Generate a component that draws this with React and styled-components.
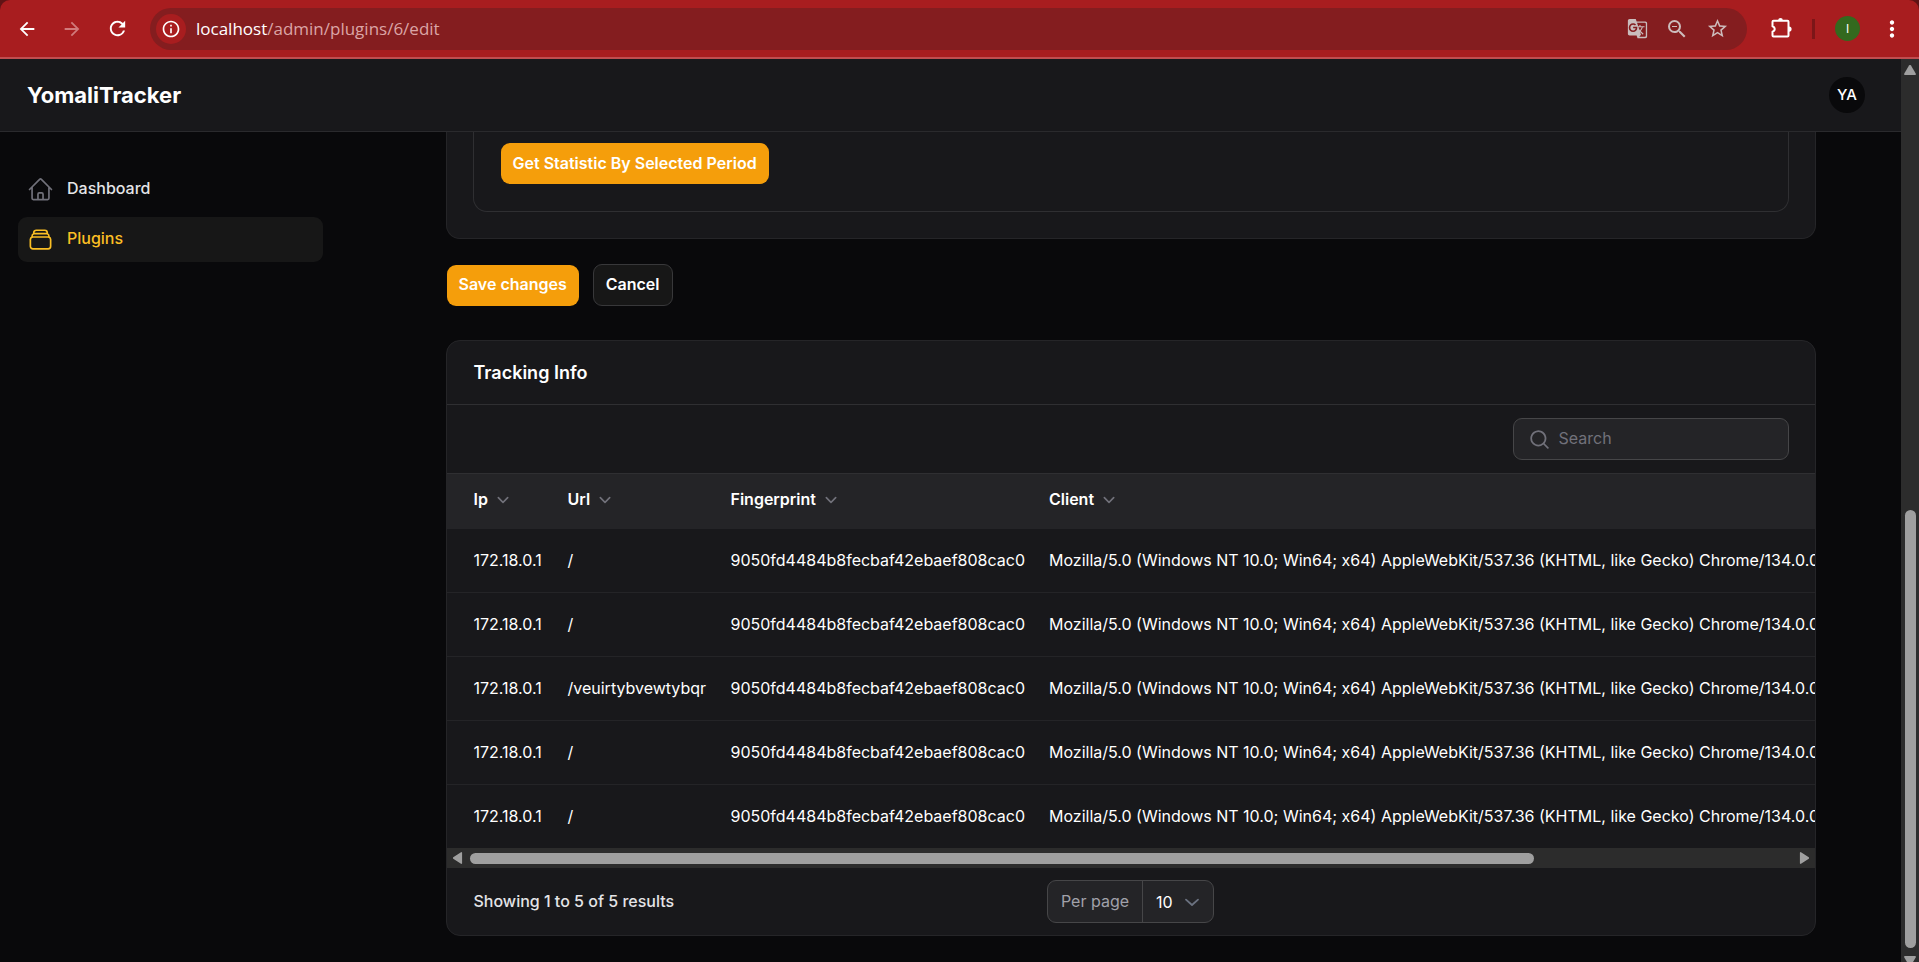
import React from 'react';
import styled, { createGlobalStyle } from 'styled-components';
import {
  HiOutlineHome,
  HiOutlineRectangleStack,
  HiMiniMagnifyingGlass,
  HiMiniChevronDown,
} from 'react-icons/hi2';
import {
  MdArrowBack,
  MdArrowForward,
  MdRefresh,
  MdInfoOutline,
  MdGTranslate,
  MdZoomOut,
  MdStarOutline,
  MdMoreVert,
} from 'react-icons/md';

const GlobalStyle = createGlobalStyle`
  *, *::before, *::after { box-sizing: border-box; }
  body {
    margin: 0;
    background: #09090b;
    color: #fff;
    font: 400 16px/24px Inter, "Liberation Sans", sans-serif;
  }
  button, input, select { font: inherit; }
  svg { display: block; flex: none; }
`;

const Window = styled.div`
  display: flex;
  flex-direction: column;
  height: 100vh;
  overflow: hidden;
  background: #5f1315;
`;

/* Browser toolbar */

const Toolbar = styled.div`
  display: flex;
  align-items: center;
  flex: none;
  height: 59px;
  padding: 0 12px 0 11px;
  border-radius: 10px 10px 0 0;
  background: #a81d1f;
  border-bottom: 2px solid #c04d4f;
`;

const ToolButton = styled.button`
  display: flex;
  align-items: center;
  justify-content: center;
  flex: none;
  width: ${(p) => p.$width || 32}px;
  height: 32px;
  padding: 0;
  border: 0;
  background: none;
  color: ${(p) => p.$color || '#fff'};
`;

const NavButtons = styled.div`
  display: flex;
  gap: 13px;
  margin-right: 17px;
`;

const AddressBar = styled.div`
  display: flex;
  align-items: center;
  flex: 1;
  height: 42px;
  padding: 0 14px 0 6px;
  border-radius: 21px;
  background: #841d1f;
`;

const SiteInfo = styled(ToolButton)`
  width: 30px;
  height: 30px;
  border-radius: 50%;
  background: #a81d1f;
`;

const Address = styled.div`
  flex: 1;
  padding-left: 10px;
  color: #dba5a6;
  font: 400 17px/24px "Open Sans", "Noto Sans", sans-serif;

  span { color: #fff; }
`;

const AddressActions = styled.div`
  display: flex;
  gap: 8px;
`;

const ToolbarEnd = styled.div`
  display: flex;
  align-items: center;
  margin-left: 18px;
`;

const ToolbarRule = styled.div`
  width: 3px;
  height: 20px;
  margin: 0 20px 0 15px;
  background: #7c1618;
`;

const Profile = styled.button`
  width: 25px;
  height: 25px;
  margin-right: 17px;
  padding: 0;
  border: 0;
  border-radius: 50%;
  background: #33691e;
  color: #fff;
  font-size: 12px;
  line-height: 25px;
`;

/* Page shell */

const Viewport = styled.div`
  display: flex;
  flex: 1;
  min-height: 0;
  background: #09090b;
`;

const Page = styled.div`
  display: flex;
  flex-direction: column;
  flex: 1;
  min-width: 0;
`;

const Topbar = styled.header`
  display: flex;
  align-items: center;
  justify-content: space-between;
  flex: none;
  height: 73px;
  padding: 0 36px 0 27px;
  background: #18181b;
  border-bottom: 1px solid #2a2a2d;
`;

const Brand = styled.a`
  color: #fff;
  font-size: 22px;
  font-weight: 700;
  line-height: 28px;
  text-decoration: none;
`;

const Avatar = styled.button`
  width: 36px;
  height: 36px;
  padding: 0;
  border: 0;
  border-radius: 50%;
  background: #09090b;
  color: #fff;
  font-size: 15px;
  font-weight: 500;
`;

const Body = styled.div`
  display: flex;
  flex: 1;
  min-height: 0;
`;

const Sidebar = styled.nav`
  display: flex;
  flex-direction: column;
  gap: 5px;
  flex: none;
  width: 360px;
  padding: 35px 37px 0 18px;
`;

const SidebarLink = styled.a`
  display: flex;
  align-items: center;
  gap: 13px;
  height: 45px;
  padding: 0 9px;
  border-radius: 9px;
  background: ${(p) => (p.$active ? '#171717' : 'transparent')};
  color: ${(p) => (p.$active ? '#fbbf24' : '#e4e4e7')};
  font-weight: 500;
  text-decoration: none;

  svg { color: ${(p) => (p.$active ? '#fbbf24' : '#71717a')}; }
  span { padding-bottom: 3px; }
`;

const Main = styled.main`
  flex: 1;
  min-width: 0;
  overflow: hidden;
  padding: 0 36px;
`;

const Content = styled.div`
  max-width: 1370px;
  margin: 0 auto;
`;

const FormCard = styled.section`
  padding: 0 26px 26px;
  border: 1px solid #252528;
  border-top: 0;
  border-radius: 0 0 14px 14px;
  background: #18181b;
`;

const Fieldset = styled.div`
  padding: 11px 27px 27px;
  border: 1px solid #2f2f32;
  border-top: 0;
  border-radius: 0 0 14px 14px;
`;

const Button = styled.button`
  display: block;
  height: ${(p) => (p.$outlined ? 42 : 41)}px;
  padding: 0 12px 2px;
  border: ${(p) => (p.$outlined ? '1px solid #38383a' : '0')};
  border-radius: 9px;
  background: ${(p) => (p.$outlined ? '#171717' : '#f59e0b')};
  color: #fff;
  font-weight: 600;
`;

const FormActions = styled.div`
  display: flex;
  align-items: center;
  gap: 14px;
  padding: 25px 0 34px 1px;
`;

/* Tracking table */

const TableCard = styled.section`
  overflow: hidden;
  border: 1px solid #252528;
  border-radius: 14px;
  background: #18181b;
`;

const CardTitle = styled.h3`
  margin: 0;
  padding: 18px 27px 17px;
  font-size: 18px;
  font-weight: 600;
  line-height: 28px;
`;

const CardToolbar = styled.div`
  display: flex;
  justify-content: flex-end;
  padding: 13px 26px;
  border-top: 1px solid #2f2f32;
  border-bottom: 1px solid #2f2f32;
`;

const SearchBox = styled.label`
  display: flex;
  align-items: center;
  gap: 8px;
  width: 276px;
  height: 42px;
  padding: 0 14px;
  border: 1px solid #464648;
  border-radius: 9px;
  background: #242427;
  color: #71717a;
`;

const SearchInput = styled.input`
  flex: 1;
  min-width: 0;
  padding: 0 0 2px;
  border: 0;
  outline: 0;
  background: none;
  color: #fff;

  &::placeholder { color: #71717a; opacity: 1; }
`;

const TableClip = styled.div`
  overflow: hidden;
`;

const Table = styled.table`
  min-width: 100%;
  border-spacing: 0;
  white-space: nowrap;

  th, td { padding: 0 11px 2px 13px; text-align: left; }
  th:first-child, td:first-child { padding-left: 27px; }
`;

const HeadCell = styled.th`
  width: ${(p) => p.$width};
  min-width: ${(p) => p.$width};
  height: 55px;
  background: #242427;
  font-weight: 600;
`;

const SortButton = styled.button`
  display: flex;
  align-items: center;
  gap: 4px;
  padding: 0 0 3px;
  border: 0;
  background: none;
  color: #fff;
  font-weight: 600;

  svg { color: #71717a; }
`;

const Row = styled.tr`
  td {
    height: 64px;
    border-bottom: 1px solid #242427;
  }
  &:last-child td {
    height: 63px;
    border-bottom: 0;
  }
`;

const HScroll = styled.div`
  display: flex;
  align-items: center;
  height: 20px;
  padding: 0 6px;
  background: #2c2c2c;
`;

const VScroll = styled.div`
  display: flex;
  flex-direction: column;
  align-items: center;
  flex: none;
  width: 18px;
  padding-top: 6px;
  background: #2c2c2c;
`;

const Thumb = styled.div`
  flex: ${(p) => p.$share};
  width: ${(p) => (p.$vertical ? '11px' : 'auto')};
  height: ${(p) => (p.$vertical ? 'auto' : '11px')};
  border-radius: 6px;
  background: #9f9f9f;
`;

const Gap = styled.div`
  flex: ${(p) => p.$share};
`;

const ArrowSlot = styled.div`
  display: flex;
  flex: none;
  justify-content: ${(p) => p.$justify || 'flex-start'};
  width: ${(p) => (p.$vertical ? 'auto' : '17px')};
  height: ${(p) => (p.$vertical ? '14px' : 'auto')};
  padding-top: ${(p) => p.$top || 0}px;
`;

const CardFooter = styled.div`
  display: grid;
  grid-template-columns: 1fr auto 1fr;
  align-items: center;
  padding: 12px 27px;
`;

const Summary = styled.span`
  padding-bottom: 2px;
  color: #e4e4e7;
  font-weight: 500;
`;

const PerPage = styled.label`
  display: flex;
  height: 43px;
  border: 1px solid #464648;
  border-radius: 9px;
  background: #242427;
  color: #a1a1aa;
  line-height: 40px;
`;

const PerPageLabel = styled.span`
  padding: 0 13px;
  border-right: 1px solid #464648;
`;

const SelectWrap = styled.span`
  display: grid;
  align-items: center;
  width: 70px;

  > * { grid-area: 1 / 1; }
  svg { justify-self: end; margin-right: 9px; pointer-events: none; }
`;

const Select = styled.select`
  width: 100%;
  height: 41px;
  padding: 0 0 0 13px;
  appearance: none;
  border: 0;
  outline: 0;
  background: none;
  color: #fff;

  option { background: #18181b; }
`;

const ARROWS = {
  up: ['M5 .6.3 8.500A1 1 0 0 0 1.100 10h9.800a1 1 0 0 0 .8-1.500L7 .6a1.200 1.200 0 0 0-2 0Z', 12, 10],
  down: ['M5 9.400.3 1.500A1 1 0 0 1 1.100 0h9.800a1 1 0 0 1 .8 1.500L7 9.400a1.200 1.200 0 0 1-2 0Z', 12, 10],
  left: ['M.6 5 8 .2a.7.7 0 0 1 1.100.6v10.400a.7.7 0 0 1-1.100.6L.6 7a1.200 1.200 0 0 1 0-2Z', 10, 12],
  right: ['M9.400 5 2 .2a.7.7 0 0 0-1.100.6v10.400a.7.7 0 0 0 1.100.6L9.400 7a1.200 1.200 0 0 0 0-2Z', 10, 12],
};

function ScrollArrow({ dir }) {
  const [d, w, h] = ARROWS[dir];
  return (
    <svg width={w} height={h} viewBox={`0 0 ${w} ${h}`} fill="#9f9f9f" aria-hidden="true">
      <path d={d} />
    </svg>
  );
}

function PuzzleIcon() {
  return (
    <svg width="24" height="24" viewBox="0 0 24 24" fill="none" stroke="#fff" strokeWidth="2" strokeLinejoin="round" aria-hidden="true">
      <path d="M4.500 3.800h14a1 1 0 0 1 1 1v13.700a1 1 0 0 1-1 1h-14a1 1 0 0 1-1-1v-3.700c1.300-.4 2.200-1.400 2.200-2.700s-.9-2.300-2.200-2.700V4.800a1 1 0 0 1 1-1Z" />
      <path d="M9.200 3.200a2.300 2.300 0 0 1 4.600 0ZM20 9.500a2.600 2.600 0 0 1 0 5.200Z" fill="#fff" stroke="none" />
    </svg>
  );
}

const COLUMNS = [
  { name: 'Ip', width: '108px' },
  { name: 'Url', width: '163px' },
  { name: 'Fingerprint', width: '317px' },
  { name: 'Client', width: 'auto' },
];

const AGENT =
  'Mozilla/5.0 (Windows NT 10.0; Win64; x64) AppleWebKit/537.36 (KHTML, like Gecko) Chrome/134.0.0.0 Safari/537.36';

const VISITS = ['/', '/', '/veuirtybvewtybqr', '/', '/'].map((url) => ({
  ip: '172.18.0.1',
  url,
  fingerprint: '9050fd4484b8fecbaf42ebaef808cac0',
  client: AGENT,
}));

function BrowserToolbar() {
  return (
    <Toolbar>
      <NavButtons>
        <ToolButton aria-label="Back"><MdArrowBack size={22} /></ToolButton>
        <ToolButton aria-label="Forward" $color="#d17a7b"><MdArrowForward size={22} /></ToolButton>
        <ToolButton aria-label="Reload"><MdRefresh size={23} /></ToolButton>
      </NavButtons>
      <AddressBar>
        <SiteInfo aria-label="Site information"><MdInfoOutline size={20} /></SiteInfo>
        <Address><span>localhost</span>/admin/plugins/6/edit</Address>
        <AddressActions>
          <ToolButton aria-label="Translate" $color="#c9bcbc"><MdGTranslate size={21} /></ToolButton>
          <ToolButton aria-label="Zoom" $color="#cdbcbc"><MdZoomOut size={24} /></ToolButton>
          <ToolButton aria-label="Bookmark" $color="#cdbcbc"><MdStarOutline size={23} /></ToolButton>
        </AddressActions>
      </AddressBar>
      <ToolbarEnd>
        <ToolButton aria-label="Extensions"><PuzzleIcon /></ToolButton>
        <ToolbarRule />
        <Profile aria-label="Profile">I</Profile>
        <ToolButton aria-label="Menu" $width={30}><MdMoreVert size={26} /></ToolButton>
      </ToolbarEnd>
    </Toolbar>
  );
}

function TrackingTable() {
  return (
    <TableCard>
      <CardTitle>Tracking Info</CardTitle>
      <CardToolbar>
        <SearchBox>
          <HiMiniMagnifyingGlass size={23} />
          <SearchInput type="search" placeholder="Search" aria-label="Search" />
        </SearchBox>
      </CardToolbar>
      <TableClip>
        <Table>
          <thead>
            <tr>
              {COLUMNS.map((c) => (
                <HeadCell key={c.name} $width={c.width}>
                  <SortButton>{c.name}<HiMiniChevronDown size={22} /></SortButton>
                </HeadCell>
              ))}
            </tr>
          </thead>
          <tbody>
            {VISITS.map((v, i) => (
              <Row key={i}>
                <td>{v.ip}</td>
                <td>{v.url}</td>
                <td>{v.fingerprint}</td>
                <td>{v.client}</td>
              </Row>
            ))}
          </tbody>
        </Table>
      </TableClip>
      <HScroll>
        <ArrowSlot><ScrollArrow dir="left" /></ArrowSlot>
        <Thumb $share={1064} />
        <Gap $share={258} />
        <ArrowSlot $justify="flex-end"><ScrollArrow dir="right" /></ArrowSlot>
      </HScroll>
      <CardFooter>
        <Summary>Showing 1 to 5 of 5 results</Summary>
        <PerPage>
          <PerPageLabel>Per page</PerPageLabel>
          <SelectWrap>
            <Select defaultValue="10">
              <option>5</option>
              <option>10</option>
              <option>25</option>
              <option>50</option>
            </Select>
            <svg width="24" height="24" viewBox="0 0 20 20" fill="none" stroke="#6b7280" strokeWidth="1.5" strokeLinecap="round" strokeLinejoin="round" aria-hidden="true">
              <path d="m5 8 5 4.500 5-4.500" />
            </svg>
          </SelectWrap>
        </PerPage>
      </CardFooter>
    </TableCard>
  );
}

export default function App() {
  return (
    <Window>
      <GlobalStyle />
      <BrowserToolbar />
      <Viewport>
        <Page>
          <Topbar>
            <Brand href="#">YomaliTracker</Brand>
            <Avatar aria-label="User menu">YA</Avatar>
          </Topbar>
          <Body>
            <Sidebar>
              <SidebarLink href="#"><HiOutlineHome size={27} /><span>Dashboard</span></SidebarLink>
              <SidebarLink href="#" $active><HiOutlineRectangleStack size={27} /><span>Plugins</span></SidebarLink>
            </Sidebar>
            <Main>
              <Content>
                <FormCard>
                  <Fieldset>
                    <Button>Get Statistic By Selected Period</Button>
                  </Fieldset>
                </FormCard>
                <FormActions>
                  <Button>Save changes</Button>
                  <Button $outlined>Cancel</Button>
                </FormActions>
                <TrackingTable />
              </Content>
            </Main>
          </Body>
        </Page>
        <VScroll>
          <ArrowSlot $vertical><ScrollArrow dir="up" /></ArrowSlot>
          <Gap $share={431} />
          <Thumb $vertical $share={438} />
          <ArrowSlot $vertical $top={8}><ScrollArrow dir="down" /></ArrowSlot>
        </VScroll>
      </Viewport>
    </Window>
  );
}
